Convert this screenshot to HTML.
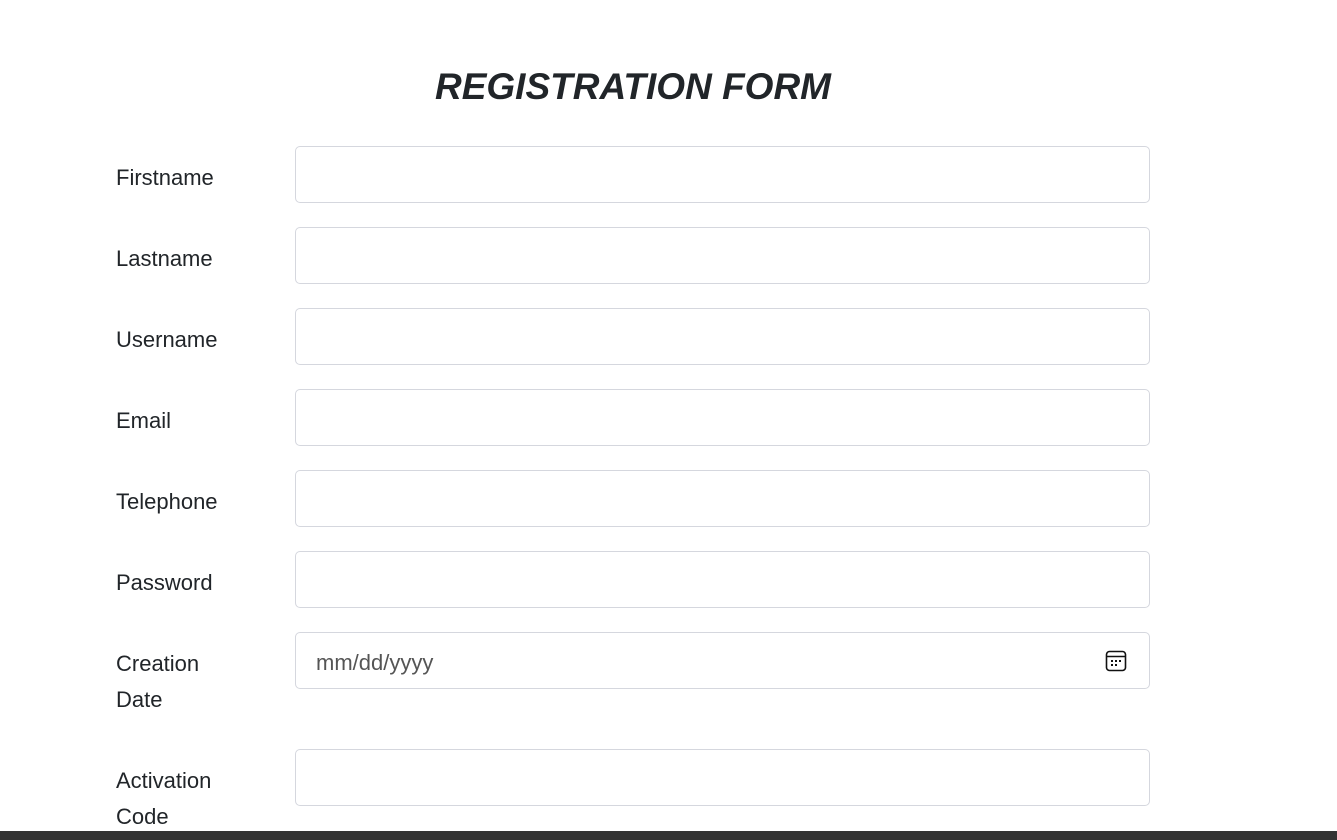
<!DOCTYPE html>
<html><head><style>
body{margin:0;width:1337px;height:840px;background:#fff;position:relative;overflow:hidden;font-family:"Segoe UI","Liberation Sans",sans-serif;color:#212529}
h1{position:absolute;left:0;width:1266px;top:62px;margin:0;text-align:center;font-style:italic;font-weight:bold;font-size:37px;line-height:50px;letter-spacing:0}
.l{position:absolute;left:116px;font-size:22px;line-height:36px}
.i{position:absolute;left:295px;width:853px;height:55px;border:1px solid #d5d7de;border-radius:5px;background:#fff}
.d{font-size:22px;color:#555;line-height:60px;padding-left:20px;box-sizing:content-box;width:833px}
.bar{position:absolute;left:0;top:831px;width:1337px;height:9px;background:#333}
</style></head><body>
<h1>REGISTRATION FORM</h1>
<div class="l" style="top:160px">Firstname</div><div class="i" style="top:146px"></div>
<div class="l" style="top:241px">Lastname</div><div class="i" style="top:227px"></div>
<div class="l" style="top:322px">Username</div><div class="i" style="top:308px"></div>
<div class="l" style="top:403px">Email</div><div class="i" style="top:389px"></div>
<div class="l" style="top:484px">Telephone</div><div class="i" style="top:470px"></div>
<div class="l" style="top:565px">Password</div><div class="i" style="top:551px"></div>
<div class="l" style="top:646px">Creation<br>Date</div><div class="i d" style="top:632px">mm/dd/yyyy
<svg style="position:absolute;left:809px;top:17px" width="22" height="22" viewBox="0 0 22 22"><rect x="1.5" y="1.5" width="19" height="19" rx="3" fill="none" stroke="#111" stroke-width="1.6"/><line x1="2" y1="6.5" x2="20" y2="6.5" stroke="#111" stroke-width="1.6"/><g fill="#111"><rect x="6" y="10" width="2" height="2"/><rect x="10" y="10" width="2" height="2"/><rect x="14" y="10" width="2" height="2"/><rect x="6" y="14" width="2" height="2"/><rect x="10" y="14" width="2" height="2"/></g></svg></div>
<div class="l" style="top:763px">Activation<br>Code</div><div class="i" style="top:749px"></div>
<div class="bar"></div>
</body></html>
